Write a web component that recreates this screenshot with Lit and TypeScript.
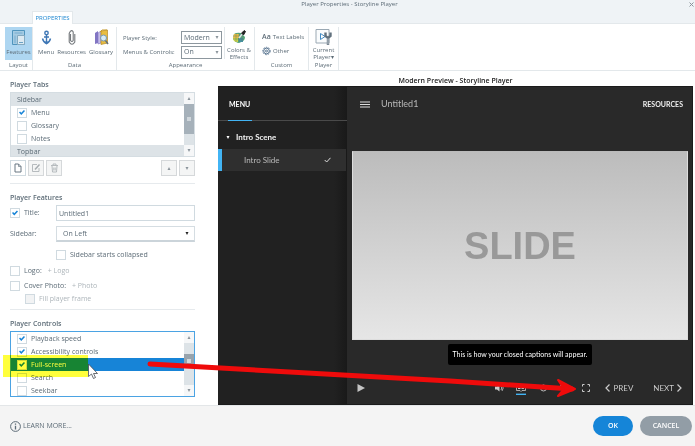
import { LitElement, html, css, svg } from "lit";
import { customElement } from "lit/decorators.js";

const chevron = (up: boolean) => html`<svg class="chev" viewBox="0 0 4 4" aria-hidden="true">
  <path d=${up ? "M0 4L2 0L4 4Z" : "M0 0H4L2 4Z"} /></svg>`;

@customElement("app-root")
export class AppRoot extends LitElement {
  static styles = css`
    :host {
      display: flex;
      flex-direction: column;
      position: relative;
      min-height: 100vh;
      overflow: hidden;
      background: #fff;
      color: #5d6c77;
      font: 7px/10px "Open Sans", "Noto Sans", sans-serif;
    }
    *, *::before { box-sizing: border-box; }
    h1, h2, h3, p { margin: 0; font: inherit; }
    button, input, select { font: inherit; color: inherit; margin: 0; }
    button { padding: 0; border: 0; background: none; display: flex; align-items: center; justify-content: center; white-space: nowrap; }
    svg { display: block; flex: none; }
    .top { display: grid; grid-template-columns: 1fr auto; background: #eff3f6; height: 24px; border-bottom: 1px solid #e3e8eb; font-size: 6px; }
    .top h1 { text-align: center; line-height: 9px; padding-left: 12px; color: #5d6c77; }
    .close { width: 8px; height: 9px; }
    .tab { grid-column: 1 / -1; justify-self: start; margin-left: 32px; margin-top: 2px; width: 41px; height: 13px; background: #fff; color: #1c86d1; border: 1px solid #e3e8eb; border-bottom: 0; }
    .ribbon { display: flex; padding: 3px 0 0 5px; height: 47px; border-bottom: 1px solid #e3e8eb; font-size: 6px; }
    .group { display: flex; flex-direction: column; justify-content: space-between; border-right: 1px solid #e3e8eb; white-space: nowrap; }
    .group h2 { text-align: center; line-height: 10px; }
    .tools { display: flex; height: 32px; }
    .big { flex-direction: column; justify-content: flex-start; gap: 2px; padding-top: 2px; line-height: 8px; }
    .big svg { height: 17px; }
    .big.stack { line-height: 7px; gap: 1px; }
    .on { background: #aed6f1; width: 27px; height: 33px; }
    .layout { width: 28px; }
    .data { width: 84px; }
    .data .tools { justify-content: space-between; padding: 0 3px 0 5px; }
    .look { width: 138px; }
    .look .tools { padding-right: 1px; }
    .combos { display: grid; grid-template-columns: 1fr 41px; gap: 1px 3px; align-items: center; flex: 1; padding: 4px 2px 0 6px; border-right: 1px solid #e3e8eb; }
    .colors { width: 28px; }
    .custom { width: 54px; }
    .custom .tools { flex-direction: column; gap: 4px; padding: 5px 0 0 7px; }
    .custom button { justify-content: flex-start; gap: 2px; }
    .aa { font-size: 7px; font-weight: 600; line-height: 10px; }
    .player { width: 30px; }
    .player .tools { justify-content: center; }
    .pick { position: relative; display: block; }
    .pick select { appearance: none; display: block; width: 100%; height: 13px; padding: 0 10px 0 2px; background: #fff; border: 1px solid #8d979e; border-radius: 0; font-size: 7px; }
    .pick .chev { position: absolute; right: 3px; top: 5px; }
    .chev { width: 4px; height: 3px; fill: #8a949b; }
    .pick.wide select { height: 16px; padding-left: 6px; border-color: #d5dde2; border-bottom: 2px solid #cbd4da; }
    .pick.wide .chev { fill: #222; right: 6px; top: 6px; }
    main { display: flex; flex: 1; }
    .side { width: 195px; flex: none; padding: 7px 0 8px 10px; }
    .side h2 { font-weight: 600; line-height: 13px; margin-bottom: 1px; }
    .side hr { border: 0; border-top: 1px solid #e6eaed; margin: 7px 0; }
    .side .deep + hr { margin-top: 5px; }
    .list { display: flex; height: 65px; border: 1px solid #d5dde2; overflow: hidden; }
    .list.focus { height: 66px; border-color: #4ba3e3; }
    .rows { flex: 1; }
    .row { display: flex; align-items: center; gap: 4px; height: 13px; padding-left: 6px; }
    .row.head { background: #dde3e7; }
    .row.sel { background: #1784d7; color: #fff; }
    .bar { width: 10px; display: flex; flex-direction: column; background: #dde3e7; }
    .bar i { flex: none; height: 11px; display: grid; place-items: center; background: #f6f7f8; }
    .bar b { flex: none; height: 30px; margin-bottom: auto; display: grid; place-items: center; background: #a6b1ba; }
    .bar b::before { content: ""; width: 4px; height: 4px; background: #d0d7dc; }
    .bar b.short { height: 13px; margin-top: 11px; background: #98a3ac; }
    input[type="checkbox"] { appearance: none; flex: none; display: grid; place-items: center; width: 10px; height: 10px; border: 1px solid #d0dae0; background: #fff; border-radius: 0; }
    input[type="checkbox"]:checked::before { content: ""; width: 6px; height: 6px; background: #1784d7; clip-path: polygon(0 50%, 18% 32%, 38% 55%, 82% 8%, 100% 26%, 38% 92%); }
    input[type="checkbox"]:disabled { background: #f2f3f4; }
    .btns { display: flex; gap: 2px; margin-top: 3px; }
    .btns button { width: 16px; height: 16px; border: 1px solid #d5d8da; background: #f4f5f5; }
    .btns button.live { background: #fff; border-color: #d0dae0; }
    .btns .push { margin-left: auto; }
    .field { display: grid; grid-template-columns: 46px 1fr; align-items: center; margin-bottom: 5px; }
    .check { display: flex; align-items: center; gap: 4px; height: 10px; }
    .field input[type="text"] { width: 100%; height: 16px; padding: 0 2px; border: 1px solid #d0dae0; }
    .inset { padding-left: 46px; margin: 8px 0 6px; }
    .photo { margin-top: 5px; }
    .deep { padding-left: 15px; margin-top: 3px; color: #adb5ba; }
    .add { color: #adb5ba; margin-left: 2px; text-decoration: none; }
    .view { flex: 1; display: flex; flex-direction: column; margin: 0 2px 0 23px; padding-top: 4px; }
    .view > h2 { text-align: center; font-weight: 600; color: #222; line-height: 11px; }
    .stage { flex: 1; display: grid; grid-template-columns: 129px 1fr; background: #292929; border: solid #1b1b1b; border-width: 1px 1px 1px 0; color: #b9b9b9; font-family: Lato, sans-serif; font-size: 8px; }
    .menu { background: linear-gradient(90deg, #212121 90%, #191919); }
    .menu h3 { height: 34px; line-height: 34px; padding-left: 11px; border-bottom: 1px solid #4a4a4a; color: #fff; font-weight: 700; font-size: 7px; position: relative; }
    .menu h3::after { content: ""; position: absolute; left: 10px; bottom: -1px; width: 24px; height: 1px; background: #42b4f4; }
    .scene { display: flex; align-items: center; gap: 6px; height: 28px; padding: 4px 0 0 8px; color: #f2f2f2; font-weight: 700; }
    .scene .chev { fill: #fff; }
    .slide-link { display: flex; align-items: center; justify-content: space-between; height: 22px; padding: 0 15px 0 22px; margin-right: 1px; border-left: 4px solid #42b4f4; background: #2f2f2f; color: inherit; text-decoration: none; }
    .screen { display: flex; flex-direction: column; padding: 0 4px 0 5px; }
    .screen header { display: flex; align-items: center; height: 34px; padding: 0 5px 0 8px; gap: 11px; }
    .screen header h3 { flex: 1; font-size: 9px; }
    .res { font-weight: 700; color: #eee; font-size: 7px; }
    .slide { height: 189px; margin-top: 30px; display: grid; place-items: center; border: 1px solid #ddd; border-top-color: #bbb; background: linear-gradient(#bcbcbc, #e6e6e6); color: #999; font: 700 38px/38px "Liberation Sans", sans-serif; }
    .caption { align-self: center; margin-top: 4px; height: 21px; line-height: 21px; padding: 0 4px; border-radius: 2px; background: #000; color: #fff; font-size: 7px; white-space: nowrap; }
    .controls { display: flex; align-items: center; flex: 1; padding: 7px 6px 0 5px; }
    .controls .sound { margin-left: auto; }
    .cc { margin: 0 14px 0 12px; }
    .speed { margin-left: 12px; }
    .full { margin: 0 15px 0 16px; }
    .nav { gap: 3px; margin-left: 20px; color: #ccc; }
    .nav.first { margin-left: 0; }
    footer { display: flex; align-items: center; gap: 7px; height: 41px; padding: 0 3px 0 10px; background: #f4f4f4; border-top: 1px solid #e3e6e8; }
    .learn { display: flex; align-items: center; gap: 2px; margin-right: auto; color: inherit; text-decoration: none; }
    .pill { width: 52px; height: 20px; border-radius: 10px; background: #929da6; color: #fff; font-weight: 600; }
    .pill.ok { width: 40px; background: #1585d8; }
    .marker { position: absolute; left: 3px; top: 355px; width: 85px; height: 22px; background: #ffff3c; mix-blend-mode: multiply; pointer-events: none; }
    .arrow { position: absolute; left: 0; top: 350px; pointer-events: none; }
  `;

  private row(id: string, text: string, checked: boolean, sel = false) {
    return html`<div class="row ${sel ? "sel" : ""}">
      <input type="checkbox" id=${id} ?checked=${checked} /><label for=${id}>${text}</label>
    </div>`;
  }

  private pick(label: string, id: string, value: string) {
    return html`<label for=${id}>${label}</label>
      <span class="pick"><select id=${id}><option>${value}</option></select>${chevron(false)}</span>`;
  }

  render() {
    return html`
      <div class="top">
        <h1>Player Properties - Storyline Player</h1>
        <button class="close" aria-label="Close"><svg width="5" height="5" viewBox="0 0 5 5" stroke="#8a949b"><path d="M.5.5L4.5 4.5M4.5.5L.5 4.5" /></svg></button>
        <button class="tab">PROPERTIES</button>
      </div>
      <nav class="ribbon">
        <section class="group layout">
          <div class="tools"><button class="big on">
            <svg width="15" height="17" viewBox="0 0 15 17" fill="none" stroke="#4f94bd"><path d="M1.5 1.5H13.5V15.5H1.5Z" fill="#a5cbe2" /><path d="M3.5 4H11.5M4 6.5V14" stroke="#77acd0" /><path d="M6.5 6.5H13.5V15.5H6.5Z" fill="#dce9f1" stroke="#85aac0" /><path d="M8 13.5h4" stroke="#6aa2c5" /></svg>
            Features</button></div>
          <h2>Layout</h2>
        </section>
        <section class="group data">
          <div class="tools">
            <button class="big"><svg width="11" height="17" viewBox="0 0 11 17" fill="none" stroke="#3f77b5" stroke-width="1.4"><circle cx="5.5" cy="4" r="1.7" /><path d="M5.5 6V14M3 8H8M1.5 9.5C2 12 3.5 13.5 5.5 14.5C7.500 13.500 9 12 9.500 9.500" /><path d="M3 12.500L5.500 15.500L8 12.500Z" fill="#3f77b5" stroke="none" /></svg>Menu</button>
            <button class="big"><svg width="8" height="17" viewBox="0 0 8 17" fill="none" stroke="#75797d" stroke-width="1.100"><path d="M2.500 5V11.500Q4 13.500 5.200 11.500V3Q4 .5 2.200 2.500L1.200 4.500V13Q4 17.500 6.800 13V5" /></svg>Resources</button>
            <button class="big"><svg width="15" height="17" viewBox="0 0 15 17"><path d="M1 4L4 2V14L1 15Z" fill="#8275c3" /><path d="M4 4L7 2V14L4 15Z" fill="#c7bee8" stroke="#8275c3" stroke-width=".6" /><path d="M7 2L13.500 1V14L7 15.500Z" fill="#e9bd3f" stroke="#b38a27" stroke-width=".7" /><path d="M6 3L8 1H13" fill="none" stroke="#c79b2d" /><circle cx="9.500" cy="9" r="3" fill="#d5ebf8" stroke="#7798b0" /><path d="M11.500 11.500L14 15" stroke="#63717b" stroke-width="1.500" /></svg>Glossary</button>
          </div>
          <h2>Data</h2>
        </section>
        <section class="group look">
          <div class="tools">
            <div class="combos">${this.pick("Player Style:", "style", "Modern")}${this.pick("Menus & Controls:", "controls", "On")}</div>
            <button class="big stack colors"><svg width="14" height="17" viewBox="0 0 14 17"><path d="M2 5Q5 3 9 4L13 8Q13 12 9 13Q7 15 4 13Q0 10 2 5Z" fill="#58a77d" /><path d="M2 5H7V9H1Z" fill="#e8bd45" /><path d="M1 9H6V13H4Q1 12 1 9Z" fill="#c8d34b" /><path d="M7 9H11V13H7Z" fill="#47909f" /><path d="M4 4V13M7 4V13M10 5V12M1 7H12M1 10H12" stroke="#557b65" stroke-width=".4" /><path d="M7 9L11 4" stroke="#dde3e7" stroke-width="1.500" /><path d="M9.500 4L11.500 6L13.500 2.500L12.500 1.500Z" fill="#222" stroke="#222" /></svg><span>Colors &<br />Effects</span></button>
          </div>
          <h2>Appearance</h2>
        </section>
        <section class="group custom">
          <div class="tools">
            <button><span class="aa">Aa</span>Text Labels</button>
            <button><svg width="9" height="10" viewBox="0 0 9 10" fill="none" stroke="#5d7893"><circle cx="4.500" cy="5" r="3.700" stroke-dasharray="1.700 1" /><circle cx="4.500" cy="5" r="2.800" /><circle cx="4.500" cy="5" r="1" /></svg>Other</button>
          </div>
          <h2>Custom</h2>
        </section>
        <section class="group player">
          <div class="tools"><button class="big stack"><svg width="18" height="17" viewBox="0 0 18 17" fill="none"><path d="M1 .5H14V14H1Z" stroke="#9aa8b3" fill="#fafcfd" /><path d="M5.500 4.500V10.500L10 7.500Z" stroke="#438bc4" /><path d="M10.500 3.500V7L13 9L15.500 7V3.500M13 9V16" stroke="#61717e" stroke-width="2.400" /><path d="M13 9.500V15.500" stroke="#dfe6eb" stroke-width=".8" /></svg><span>Current<br />Player▾</span></button></div>
          <h2>Player</h2>
        </section>
      </nav>
      <main>
        <div class="side">
          <h2>Player Tabs</h2>
          <div class="list">
            <div class="rows">
              <div class="row head">Sidebar</div>
              ${this.row("menu", "Menu", true)}${this.row("glossary", "Glossary", false)}${this.row("notes", "Notes", false)}
              <div class="row head">Topbar</div>
            </div>
            <div class="bar"><i>${chevron(true)}</i><b></b><i>${chevron(false)}</i></div>
          </div>
          <div class="btns">
            <button class="live" aria-label="New tab"><svg width="8" height="10" viewBox="0 0 8 10" fill="none" stroke="#687782"><path d="M1 1H4.500L7 3.500V9H1Z" /><path d="M4.500 1V3.500H7" stroke-width=".7" /></svg></button>
            <button aria-label="Edit tab"><svg width="10" height="10" viewBox="0 0 10 10" fill="none" stroke="#a6acb0"><path d="M6 1.500H1.500V8.500H8V5" stroke-width=".8" /><path d="M4 6.500L8.500 1.500" stroke-width="1.500" /></svg></button>
            <button aria-label="Delete tab"><svg width="9" height="10" viewBox="0 0 9 10" fill="none" stroke="#a6acb0"><path d="M1 2.500H8M3 2V1H6V2M2 3L2.500 9H6.500L7 3M3.800 4.500V7.500M5.200 4.500V7.500" stroke-width=".8" /></svg></button>
            <button class="push" aria-label="Move up">${chevron(true)}</button>
            <button aria-label="Move down">${chevron(false)}</button>
          </div>
          <hr />
          <h2>Player Features</h2>
          <div class="field">
            <div class="check"><input type="checkbox" id="title" checked /><label for="title">Title:</label></div>
            <input type="text" aria-label="Title" value="Untitled1" />
          </div>
          <div class="field">
            <label for="sidebar">Sidebar:</label>
            <span class="pick wide"><select id="sidebar"><option>On Left</option></select>${chevron(false)}</span>
          </div>
          <div class="check inset"><input type="checkbox" id="collapsed" /><label for="collapsed">Sidebar starts collapsed</label></div>
          <div class="check"><input type="checkbox" id="logo" /><label for="logo">Logo:</label><a class="add" href="#">+ Logo</a></div>
          <div class="check photo"><input type="checkbox" id="cover" /><label for="cover">Cover Photo:</label><a class="add" href="#">+ Photo</a></div>
          <div class="check deep"><input type="checkbox" id="fill" disabled /><label for="fill">Fill player frame</label></div>
          <hr />
          <h2>Player Controls</h2>
          <div class="list focus">
            <div class="rows">
              ${this.row("speed", "Playback speed", true)}${this.row("access", "Accessibility controls", true)}
              ${this.row("full", "Full-screen", true, true)}${this.row("search", "Search", false)}${this.row("seek", "Seekbar", false)}
            </div>
            <div class="bar"><i>${chevron(true)}</i><b class="short"></b><i>${chevron(false)}</i></div>
          </div>
        </div>
        <div class="view">
          <h2>Modern Preview - Storyline Player</h2>
          <div class="stage">
            <div class="menu">
              <h3>MENU</h3>
              <div class="scene">${chevron(false)}Intro Scene</div>
              <a class="slide-link" href="#">Intro Slide<svg width="7" height="6" viewBox="0 0 7 6" fill="none" stroke="#ddd"><path d="M.7 3L2.700 5L6.500 .8" /></svg></a>
            </div>
            <div class="screen">
              <header>
                <svg width="10" height="7" viewBox="0 0 10 7" stroke="#ddd"><path d="M0 1H10M0 3.500H10M0 6H10" /></svg>
                <h3>Untitled1</h3><button class="res">RESOURCES</button>
              </header>
              <div class="slide">SLIDE</div>
              <p class="caption">This is how your closed captions will appear.</p>
              <div class="controls">
                <button aria-label="Play"><svg width="8" height="8" viewBox="0 0 8 8" fill="#c4c4c4"><path d="M.5 0L8 4L.5 8Z" /></svg></button>
                <button class="sound" aria-label="Volume"><svg width="9" height="8" viewBox="0 0 9 8" fill="#ccc"><path d="M0 2.500H2L4.500 .5V7.500L2 5.500H0Z" /><path d="M6 2Q7.500 4 6 6M7 1Q9.500 4 7 7" fill="none" stroke="#ccc" stroke-width=".8" /></svg></button>
                <button class="cc" aria-label="Captions"><svg width="10" height="14" viewBox="0 0 10 14" fill="none" stroke="#ccc"><path d="M.5 3.500H9.500V9.500H6L5 10.500L4 9.500H.5Z" stroke-width=".8" /><path d="M2 7.500H4.500M5.500 7.500H8" /><path d="M0 13.300H10" stroke="#42b4f4" stroke-width="1.400" /></svg></button>
                <button aria-label="Settings"><svg width="7" height="8" viewBox="0 0 7 8" fill="none" stroke="#bbb"><circle cx="3.500" cy="4" r="3" /></svg></button>
                <button class="speed" aria-label="Playback speed"><svg width="7" height="8" viewBox="0 0 7 8" fill="none" stroke="#bbb"><path d="M1 2Q3.500 0 6 2" /></svg></button>
                <button class="full" aria-label="Full screen"><svg width="8" height="8" viewBox="0 0 8 8" fill="none" stroke="#ccc"><path d="M.5 2.500V.5H2.500M5.500 .5H7.500V2.500M7.500 5.500V7.500H5.500M2.500 7.500H.5V5.500" /></svg></button>
                <button class="nav first"><svg width="5" height="8" viewBox="0 0 5 8" fill="none" stroke="#ccc" stroke-width="1.200"><path d="M4.500 .5L1 4L4.500 7.500" /></svg>PREV</button>
                <button class="nav">NEXT<svg width="5" height="8" viewBox="0 0 5 8" fill="none" stroke="#ccc" stroke-width="1.200"><path d="M.5 .5L4 4L.5 7.500" /></svg></button>
              </div>
            </div>
          </div>
        </div>
      </main>
      <footer>
        <a class="learn" href="#"><svg width="11" height="11" viewBox="0 0 11 11" fill="none" stroke="#5d6c77"><circle cx="5.500" cy="5.500" r="4.900" /><path d="M5.500 2.500V3.700M5.500 4.700V8.500" stroke-width="1.300" /></svg>LEARN MORE...</a>
        <button class="pill ok">OK</button>
        <button class="pill">CANCEL</button>
      </footer>
      <div class="marker"></div>
      <svg class="arrow" width="600" height="54" viewBox="0 350 600 54" fill="none" aria-hidden="true">
        ${svg`<path d="M150 364L450 381L572 389" stroke="#ef0b0b" stroke-width="5" stroke-linecap="round" />
        <path d="M558 380L575 389L558 396L564 389Z" fill="#ef0b0b" stroke="#ef0b0b" stroke-width="2" stroke-linecap="round" stroke-linejoin="round" />
        <path d="M88.500 364V376.500L91.500 374L93.500 378.500L95.500 377.500L93.500 373.500H97.500Z" fill="#fff" stroke="#454a52" stroke-width=".8" />`}
      </svg>
    `;
  }
}
